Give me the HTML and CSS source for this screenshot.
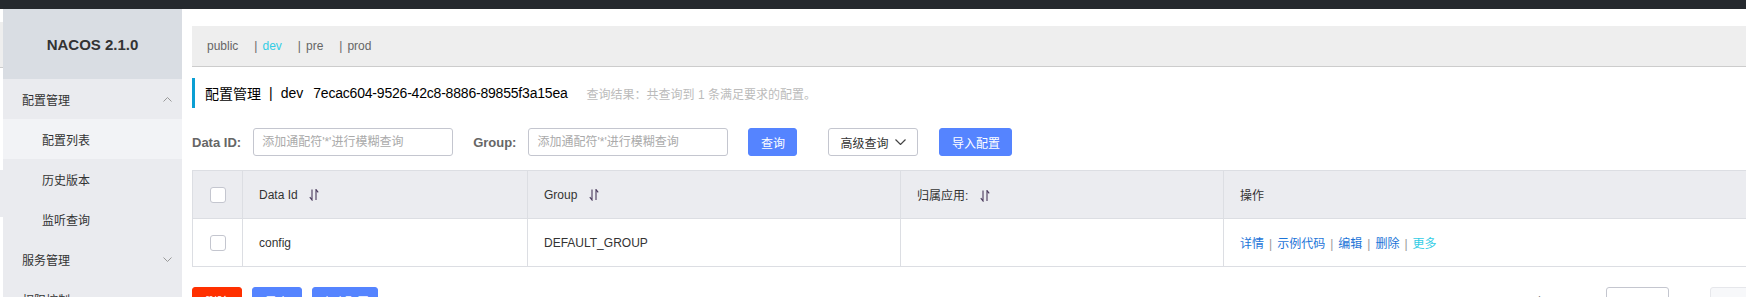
FILE: index.html
```html
<!DOCTYPE html>
<html lang="zh-CN">
<head>
    <meta charset="UTF-8">
    <title>Nacos - 配置管理</title>
    <link rel="stylesheet" href="styles.css">
</head>
<body>
    <div class="topbar"></div>

    <div class="layout">
        <div class="edge"></div>

        <!-- Sidebar -->
        <aside class="sidebar">
            <div class="brand">NACOS 2.1.0</div>
            <ul class="menu">
                <li class="menu-group">
                    <span>配置管理</span>
                    <svg class="chevron" width="9" height="5" viewBox="0 0 9 5"><polyline points="0.5,4.5 4.5,0.5 8.5,4.5"/></svg>
                </li>
                <li class="menu-item active">配置列表</li>
                <li class="menu-item">历史版本</li>
                <li class="menu-item">监听查询</li>
                <li class="menu-group">
                    <span>服务管理</span>
                    <svg class="chevron" width="9" height="5" viewBox="0 0 9 5"><polyline points="0.5,0.5 4.5,4.5 8.5,0.5"/></svg>
                </li>
                <li class="menu-group">
                    <span>权限控制</span>
                    <svg class="chevron" width="9" height="5" viewBox="0 0 9 5"><polyline points="0.5,0.5 4.5,4.5 8.5,0.5"/></svg>
                </li>
            </ul>
        </aside>

        <main class="main">
            <div class="content">
                <!-- Namespaces -->
                <div class="ns-bar">
                    <span class="ns">public</span>
                    <span class="ns-sep">|</span><span class="ns current">dev</span>
                    <span class="ns-sep">|</span><span class="ns">pre</span>
                    <span class="ns-sep">|</span><span class="ns">prod</span>
                </div>

                <div class="page-title">
                    <span>配置管理</span>
                    <span class="title-sep">|</span>
                    <span>dev</span>
                    <span class="ns-id">7ecac604-9526-42c8-8886-89855f3a15ea</span>
                    <span class="result">查询结果：共查询到 1 条满足要求的配置。</span>
                </div>

                <!-- Search form -->
                <div class="search">
                    <div class="search-item">
                        <label for="dataId">Data ID:</label>
                        <input type="text" id="dataId" placeholder="添加通配符'*'进行模糊查询">
                    </div>
                    <div class="search-item">
                        <label for="group">Group:</label>
                        <input type="text" id="group" placeholder="添加通配符'*'进行模糊查询">
                    </div>
                    <button class="btn btn-primary btn-query">查询</button>
                    <button class="btn btn-normal btn-advanced">高级查询
                        <svg width="11" height="6" viewBox="0 0 11 6"><polyline points="0.5,0.5 5.5,5.5 10.5,0.5"/></svg>
                    </button>
                    <button class="btn btn-primary btn-import">导入配置</button>
                </div>

                <!-- Config list -->
                <table class="config-table">
                    <colgroup>
                        <col class="col-check">
                        <col class="col-id">
                        <col class="col-group">
                        <col class="col-app">
                        <col>
                    </colgroup>
                    <thead>
                        <tr>
                            <th class="cell-check"><span class="checkbox"></span></th>
                            <th>Data Id <svg class="sort" width="10" height="12" viewBox="0 0 10 12"><path d="M3 0.5V11L0.8 8.2M7 11V0.5L9.2 3.3"/></svg></th>
                            <th>Group <svg class="sort" width="10" height="12" viewBox="0 0 10 12"><path d="M3 0.5V11L0.8 8.2M7 11V0.5L9.2 3.3"/></svg></th>
                            <th>归属应用: <svg class="sort" width="10" height="12" viewBox="0 0 10 12"><path d="M3 0.5V11L0.8 8.2M7 11V0.5L9.2 3.3"/></svg></th>
                            <th>操作</th>
                        </tr>
                    </thead>
                    <tbody>
                        <tr>
                            <td class="cell-check"><span class="checkbox"></span></td>
                            <td>config</td>
                            <td>DEFAULT_GROUP</td>
                            <td></td>
                            <td class="actions">
                                <a href="#">详情</a><span class="sep">|</span><a href="#">示例代码</a><span class="sep">|</span><a href="#">编辑</a><span class="sep">|</span><a href="#">删除</a><span class="sep">|</span><a href="#" class="more">更多</a>
                            </td>
                        </tr>
                    </tbody>
                </table>

                <div class="footer-bar">
                    <div class="batch">
                        <button class="btn btn-danger btn-small">删除</button>
                        <button class="btn btn-primary btn-small">导出</button>
                        <button class="btn btn-primary btn-wide">克隆配置</button>
                    </div>
                    <div class="pager">
                        <span class="page-size-label">每页显示：</span>
                        <span class="page-size"></span>
                        <span class="page-btn">上一页</span>
                    </div>
                </div>
            </div>
        </main>
    </div>
</body>
</html>
```

FILE: styles.css
```css
* {
    box-sizing: border-box;
    margin: 0;
    padding: 0;
}

body {
    font-family: 'Liberation Sans', 'Noto Sans CJK SC', sans-serif;
    font-size: 12px;
    color: #333;
    background-color: #fff;
    overflow: hidden;
}

.topbar {
    height: 9px;
    background-color: #25292e;
}

.layout {
    display: flex;
    height: calc(100vh - 9px);
}

/* thin strip of the page behind */
.edge {
    width: 3px;
    background: linear-gradient(#fff 0, #fff 13px, #eee 13px, #eee 58px, #ccc 58px, #ccc 59px,
        #fff 59px, #fff 161px, #eaebef 161px, #eaebef 208px, #fff 208px);
}

/* Sidebar */
.sidebar {
    width: 179px;
    background-color: #eaebef;
    flex-shrink: 0;
}

.brand {
    height: 70px;
    display: flex;
    align-items: center;
    justify-content: center;
    background-color: #d9dde3;
    font-size: 15px;
    font-weight: 700;
    color: #333;
}

.menu {
    list-style: none;
}

.menu-group,
.menu-item {
    height: 40px;
    display: flex;
    align-items: center;
    font-size: 12px;
    color: #333;
}

.menu-group {
    justify-content: space-between;
    padding: 0 10px 0 19px;
}

.menu-item {
    padding-left: 39px;
}

.menu-item.active {
    background-color: #f2f3f6;
}

.chevron {
    fill: none;
    stroke: #999;
    stroke-width: 1;
}

/* Main area */
.main {
    flex: 1;
    margin-left: 10px;
    overflow: hidden;
    padding-top: 17px;
}

.content {
    width: 1580px;
}

.ns-bar {
    height: 41px;
    display: flex;
    align-items: center;
    padding-left: 15px;
    background-color: #eee;
    border-bottom: 1px solid #ccc;
    color: #666;
    font-size: 12px;
}

.ns {
    margin-right: 16px;
}

.ns.current {
    color: #33cde5;
}

.ns-sep {
    margin-right: 5px;
}

.page-title {
    margin-top: 11px;
    height: 30px;
    display: flex;
    align-items: center;
    padding-left: 10px;
    border-left: 3px solid #0b9fd3;
    font-size: 14px;
    color: #000;
}

.title-sep {
    margin: 0 8px;
}

.ns-id {
    margin-left: 10px;
    letter-spacing: -0.2px;
}

.result {
    margin-left: 19px;
    font-size: 12px;
    color: #bbb;
}

/* Search form */
.search {
    margin-top: 20px;
    height: 28px;
    display: flex;
    align-items: center;
}

.search-item {
    display: flex;
    align-items: center;
    margin-right: 20px;
}

.search-item label {
    font-size: 13px;
    font-weight: 700;
    color: #666;
    margin-right: 12px;
}

.search-item input {
    width: 200px;
    height: 28px;
    padding: 0 8px;
    border: 1px solid #c4c6cf;
    border-radius: 3px;
    font-family: inherit;
    font-size: 12px;
    color: #333;
    outline: none;
}

.search-item input::placeholder {
    color: #aaa;
}

.btn {
    height: 28px;
    border-radius: 3px;
    font-family: inherit;
    font-size: 12px;
    cursor: pointer;
    display: inline-flex;
    align-items: center;
    justify-content: center;
}

.btn-primary {
    background-color: #5584ff;
    border: 1px solid #5584ff;
    color: #fff;
}

.btn-danger {
    background-color: #ff3000;
    border: 1px solid #ff3000;
    color: #fff;
}

.btn-normal {
    background-color: #fff;
    border: 1px solid #c4c6cf;
    color: #333;
}

.btn-query {
    width: 49px;
    margin-right: 31px;
}

.btn-advanced {
    width: 90px;
    margin-right: 21px;
    gap: 7px;
}

.btn-advanced svg {
    fill: none;
    stroke: #444;
    stroke-width: 1.2;
}

.btn-import {
    width: 73px;
}

/* Table */
.config-table {
    margin-top: 14px;
    width: 100%;
    table-layout: fixed;
    border-collapse: collapse;
    font-size: 12px;
    color: #333;
}

.col-check { width: 50px; }
.col-id { width: 285px; }
.col-group { width: 373px; }
.col-app { width: 323px; }

.config-table th,
.config-table td {
    height: 48px;
    padding: 0 16px;
    border: 1px solid #dcdee3;
    text-align: left;
    font-weight: 400;
    white-space: nowrap;
}

.config-table thead th {
    background-color: #ebecf0;
}

.config-table .cell-check {
    padding: 0;
    text-align: center;
}

.checkbox {
    display: inline-block;
    width: 16px;
    height: 16px;
    border: 1px solid #c4c6cf;
    border-radius: 3px;
    background-color: #fff;
    vertical-align: middle;
}

.sort {
    margin-left: 8px;
    vertical-align: -2px;
    fill: none;
    stroke: #4a3a5c;
    stroke-width: 1.1;
}

.actions a {
    color: #1c74d8;
    text-decoration: none;
}

.actions a.more {
    color: #33cde5;
}

.actions .sep {
    margin: 0 5px;
    color: #999;
}

/* Footer */
.footer-bar {
    margin-top: 20px;
    display: flex;
    justify-content: space-between;
    align-items: center;
}

.batch {
    display: flex;
    gap: 10px;
}

.btn-small {
    width: 50px;
}

.btn-wide {
    width: 66px;
}

.pager {
    display: flex;
    align-items: center;
    color: #666;
}

.page-size-label {
    margin-right: 10px;
}

.page-size {
    width: 63px;
    height: 28px;
    border: 1px solid #c4c6cf;
    border-radius: 3px;
    margin-right: 41px;
}

.page-btn {
    width: 62px;
    height: 28px;
    border: 1px solid #e6e7eb;
    border-radius: 3px;
    background-color: #f7f8fa;
    color: #ccc;
    padding: 6px 8px;
}
```
